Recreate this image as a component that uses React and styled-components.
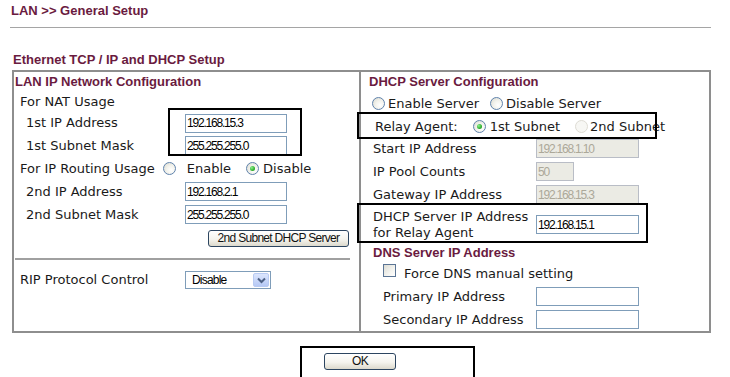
import React from 'react';
import styled, { createGlobalStyle } from 'styled-components';

const Global = createGlobalStyle`
  html, body { margin: 0; padding: 0; background: #fff; }
  body {
    font-family: "DejaVu Sans", Verdana, sans-serif;
    font-size: 13px;
    color: #1a1a1a;
  }
`;

const MAROON = '#6a1b40';
const GRID = '#8e8e8e';
const NARROW = '"Liberation Sans Narrow", "Liberation Sans", Arial, sans-serif';

const Page = styled.div`
  width: 730px;
  height: 377px;
  overflow: hidden;
  box-sizing: border-box;
  padding: 3px 0 0 10px;
`;

const PageTitle = styled.h1`
  margin: 0 0 0 1px;
  font: bold 13px/16px "Liberation Sans", Arial, sans-serif;
  color: ${MAROON};
`;

const Rule = styled.div`
  margin-top: 8px;
  width: 701px;
  height: 1px;
  background: #a5a5a5;
`;

const SectionTitle = styled.h2`
  margin: 24px 0 0 3px;
  font: bold 13px/16px "Liberation Sans", Arial, sans-serif;
  color: ${MAROON};
`;

const Table = styled.div`
  position: relative;
  margin: 2px 0 0 2px;
  width: 699px;
  box-sizing: border-box;
  border: 2px solid ${GRID};
  display: grid;
  grid-template-columns: 347px 1fr;
`;

const Cell = styled.div`
  display: flex;
  flex-direction: column;
  box-sizing: border-box;
  border-right: ${p => (p.$divider ? `2px solid ${GRID}` : 'none')};
`;

const Heading = styled.div`
  height: ${p => p.$h}px;
  display: flex;
  align-items: center;
  padding-left: ${p => p.$indent}px;
  font: bold 13px/16px "Liberation Sans", Arial, sans-serif;
  color: ${MAROON};
`;

const Row = styled.div`
  height: ${p => p.$h}px;
  display: flex;
  align-items: center;
  padding-left: ${p => p.$indent || 0}px;
  white-space: nowrap;
`;

const Field = styled.div`
  height: ${p => p.$h || 23}px;
  display: grid;
  grid-template-columns: ${p => p.$col}px auto;
  align-items: center;
  white-space: nowrap;
`;

const Label = styled.span`
  padding-left: ${p => p.$indent}px;
  line-height: 16px;
`;

const TextInput = styled.input`
  box-sizing: border-box;
  width: ${p => p.$w}px;
  height: 19px;
  margin: 0;
  padding: 0 1px;
  border: 1px solid #7f9db9;
  background: #fff;
  color: #000;
  font: 12px ${NARROW};
  letter-spacing: -1.2px;
  outline: none;
  &:disabled {
    background: #ebebe4;
    border-color: #b9bdc6;
    color: #aca899;
  }
`;

const Choice = styled.span`
  display: inline-flex;
  align-items: center;
  gap: ${p => p.$gap}px;
  margin-left: ${p => p.$ml || 0}px;
`;

const Radio = styled.span`
  box-sizing: border-box;
  display: inline-flex;
  align-items: center;
  justify-content: center;
  width: 13px;
  height: 13px;
  border-radius: 50%;
  border: 1px solid ${p => (p.$disabled ? '#dedcd4' : '#5f82ac')};
  background: ${p =>
    p.$disabled
      ? '#f7f7f4'
      : 'radial-gradient(circle at 65% 65%, #ffffff 0%, #f2f2ec 45%, #d8d8ce 100%)'};
  &::after {
    content: '';
    display: ${p => (p.$checked ? 'block' : 'none')};
    width: 5px;
    height: 5px;
    border-radius: 50%;
    background: radial-gradient(circle at 35% 35%, #8ef08e 0%, #30b030 60%, #1a8a1a 100%);
  }
`;

const CheckBox = styled.span`
  box-sizing: border-box;
  display: inline-block;
  width: 13px;
  height: 13px;
  margin-bottom: 6px;
  border: 1px solid #5b7595;
  background: linear-gradient(135deg, #dcdcd4 0%, #f4f4f0 60%, #ffffff 100%);
`;

const Button = styled.button`
  box-sizing: border-box;
  width: ${p => p.$w}px;
  height: 17px;
  margin: 0;
  padding: 0;
  border: 1px solid #2c4560;
  border-radius: 3px;
  background: linear-gradient(#ffffff 0%, #f5f4ee 55%, #dcd9cc 100%);
  color: #111;
  font: 12px/15px ${NARROW};
  letter-spacing: -0.7px;
  white-space: nowrap;
  cursor: default;
`;

const Divider = styled.div`
  height: ${p => p.$h}px;
  display: flex;
  align-items: center;
  padding-left: 1px;
  padding-right: 9px;
  &::before {
    content: '';
    flex: 1;
    height: 2px;
    background: #a0a0a0;
  }
`;

const SelectBox = styled.div`
  box-sizing: border-box;
  width: 86px;
  height: 18px;
  border: 1px solid #7f9db9;
  background: #fff;
  display: flex;
  align-items: center;
  justify-content: space-between;
  padding: 0 1px 0 6px;
  font: 12px ${NARROW};
  letter-spacing: -0.8px;
  color: #000;
`;

const SelectArrow = styled.span`
  width: 16px;
  height: 14px;
  border-radius: 2px;
  border: 1px solid #b8cbf3;
  box-sizing: border-box;
  background: linear-gradient(#dce6fd, #b6c9f5);
  display: flex;
  align-items: center;
  justify-content: center;
`;

const Mark = styled.div`
  position: absolute;
  left: ${p => p.$x}px;
  top: ${p => p.$y}px;
  width: ${p => p.$w}px;
  height: ${p => p.$h}px;
  box-sizing: border-box;
  border: 2px solid #000;
  pointer-events: none;
`;

const Footer = styled.div`
  margin: 13px 0 0 290px;
  width: 175px;
  height: 40px;
  box-sizing: border-box;
  border: 2px solid #000;
  border-bottom: none;
  padding: 5px 0 0 22px;
`;

const TwoLine = styled.span`
  padding-left: ${p => p.$indent}px;
  line-height: 16px;
`;

export default function App() {
  return (
    <>
      <Global />
      <Page>
        <PageTitle>LAN &gt;&gt; General Setup</PageTitle>
        <Rule />
        <SectionTitle>Ethernet TCP / IP and DHCP Setup</SectionTitle>
        <Table>
          <Cell $divider>
            <Heading $h={19} $indent={1}>LAN IP Network Configuration</Heading>
            <Row $h={21} $indent={6}>For NAT Usage</Row>
            <Field $h={22} $col={171}>
              <Label $indent={12}>1st IP Address</Label>
              <TextInput $w={102} defaultValue="192.168.15.3" />
            </Field>
            <Field $h={23} $col={171}>
              <Label $indent={12}>1st Subnet Mask</Label>
              <TextInput $w={102} defaultValue="255.255.255.0" />
            </Field>
            <Row $h={23} $indent={6}>
              For IP Routing Usage
              <Choice $ml={8} $gap={11}>
                <Radio />
                Enable
              </Choice>
              <Choice $ml={15} $gap={4}>
                <Radio $checked />
                Disable
              </Choice>
            </Row>
            <Field $h={23} $col={171}>
              <Label $indent={12}>2nd IP Address</Label>
              <TextInput $w={102} defaultValue="192.168.2.1" />
            </Field>
            <Field $h={23} $col={171}>
              <Label $indent={12}>2nd Subnet Mask</Label>
              <TextInput $w={102} defaultValue="255.255.255.0" />
            </Field>
            <Row $h={24} $indent={194}>
              <Button $w={141}>2nd Subnet DHCP Server</Button>
            </Row>
            <Divider $h={18} />
            <Field $h={24} $col={171}>
              <Label $indent={6}>RIP Protocol Control</Label>
              <SelectBox>
                Disable
                <SelectArrow>
                  <svg width="9" height="7" viewBox="0 0 9 7">
                    <path d="M1 1.5 L4.5 5 L8 1.5" fill="none" stroke="#4d6185" strokeWidth="2" />
                  </svg>
                </SelectArrow>
              </SelectBox>
            </Field>
          </Cell>
          <Cell>
            <Heading $h={19} $indent={8}>DHCP Server Configuration</Heading>
            <Row $h={24} $indent={11}>
              <Choice $gap={3}>
                <Radio />
                Enable Server
              </Choice>
              <Choice $ml={11} $gap={3}>
                <Radio />
                Disable Server
              </Choice>
            </Row>
            <Row $h={22} $indent={14}>
              Relay Agent:
              <Choice $ml={15} $gap={4}>
                <Radio $checked />
                1st Subnet
              </Choice>
              <Choice $ml={15} $gap={2}>
                <Radio $disabled />
                2nd Subnet
              </Choice>
            </Row>
            <Field $h={23} $col={175}>
              <Label $indent={12}>Start IP Address</Label>
              <TextInput $w={103} disabled defaultValue="192.168.1.10" />
            </Field>
            <Field $h={23} $col={175}>
              <Label $indent={12}>IP Pool Counts</Label>
              <TextInput $w={38} disabled defaultValue="50" />
            </Field>
            <Field $h={23} $col={175}>
              <Label $indent={12}>Gateway IP Address</Label>
              <TextInput $w={103} disabled defaultValue="192.168.15.3" />
            </Field>
            <Field $h={37} $col={175}>
              <TwoLine $indent={12}>
                DHCP Server IP Address
                <br />
                for Relay Agent
              </TwoLine>
              <TextInput $w={103} defaultValue="192.168.15.1" />
            </Field>
            <Heading $h={19} $indent={12}>DNS Server IP Address</Heading>
            <Row $h={23} $indent={22}>
              <Choice $gap={8}>
                <CheckBox />
                Force DNS manual setting
              </Choice>
            </Row>
            <Field $h={23} $col={175}>
              <Label $indent={22}>Primary IP Address</Label>
              <TextInput $w={103} defaultValue="" />
            </Field>
            <Field $h={23} $col={175}>
              <Label $indent={22}>Secondary IP Address</Label>
              <TextInput $w={103} defaultValue="" />
            </Field>
          </Cell>
          <Mark $x={154} $y={36} $w={134} $h={48} />
          <Mark $x={343} $y={40} $w={300} $h={27} />
          <Mark $x={343} $y={131} $w={291} $h={40} />
        </Table>
        <Footer>
          <Button $w={72}>OK</Button>
        </Footer>
      </Page>
    </>
  );
}
